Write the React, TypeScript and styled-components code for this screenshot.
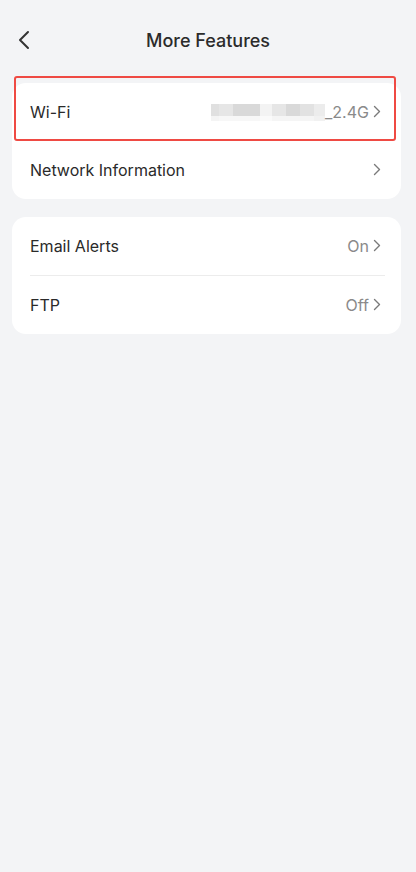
import { createGlobalStyle, styled } from "styled-components";

const GlobalStyle = createGlobalStyle`
    html, body {
        margin: 0;
        padding: 0;
        background: #f3f4f6;
    }
    body {
        font-family: Inter, "Noto Sans", "Liberation Sans", sans-serif;
        -webkit-font-smoothing: antialiased;
    }
`;

const Page = styled.div`
    width: 416px;
    min-height: 872px;
    background: #f3f4f6;
    padding: 0 15px 0 12px;
    box-sizing: border-box;
`;

const Header = styled.div`
    height: 83px;
    display: flex;
    align-items: center;
    position: relative;
    padding-bottom: 3px;
    box-sizing: border-box;
    .back {
        position: absolute;
        left: 5px;
        top: 30px;
        display: flex;
    }
    h1 {
        flex: 1;
        margin: 0;
        text-align: center;
        font-size: 18px;
        font-weight: 500;
        color: #2b2b2b;
        padding-left: 3px;
    }
`;

const Card = styled.div`
    background: #fff;
    border-radius: 14px;
    margin-bottom: 18px;
`;

const Row = styled.div<{ $divider?: boolean }>`
    height: 58px;
    display: flex;
    align-items: center;
    padding: 0 20px 1px 18px;
    position: relative;
    box-sizing: border-box;
    ${(p) => (p.$divider ? "border-bottom: 1px solid #ececec; margin: 0 16px 0 18px; padding: 0 4px 1px 0; height: 59px;" : "")}
    .label {
        flex: 1;
        font-size: 16px;
        color: #2a2a2a;
    }
    .value {
        font-size: 16px;
        color: #8a8a8a;
        margin-right: 4px;
        display: flex;
        align-items: center;
    }
`;

const Highlight = styled.div`
    position: absolute;
    left: 2px;
    right: 5px;
    top: -7px;
    bottom: 0;
    border: 2.5px solid #ef4a43;
    border-radius: 3px;
    pointer-events: none;
`;

const Blur = styled.span`
    display: inline-flex;
    flex-direction: column;
    margin-top: 2px;
    div {
        display: flex;
    }
    span {
        display: block;
    }
`;

const blocks = [
    ["#e0e0e0", 8],
    ["#e6e6e6", 14],
    ["#d9d9d9", 27],
    ["#f3f3f3", 12],
    ["#e6e6e6", 14],
    ["#d9d9d9", 14],
    ["#e2e2e2", 14],
    ["#ececec", 11],
] as const;

const bottoms = [
    ["#f4f4f4", 8],
    ["#f7f7f7", 41],
    ["#fafafa", 12],
    ["#f5f5f5", 42],
    ["#f1f1f1", 11],
] as const;

const Chevron = () => (
    <svg width="8" height="13" viewBox="0 0 8 13">
        <path d="M1.5 1.5 L6.5 6.5 L1.5 11.5" fill="none" stroke="#7a7a7a" strokeWidth="1.4" strokeLinecap="round" strokeLinejoin="round" />
    </svg>
);

const App = () => {
    return (
        <>
            <GlobalStyle />
            <Page>
                <Header>
                    <span className="back">
                        <svg width="14" height="20" viewBox="0 0 14 20">
                            <path d="M11 2 L3 10 L11 18" fill="none" stroke="#333" strokeWidth="2" strokeLinecap="round" strokeLinejoin="round" />
                        </svg>
                    </span>
                    <h1>More Features</h1>
                </Header>
                <Card>
                    <Row>
                        <Highlight />
                        <span className="label">Wi-Fi</span>
                        <span className="value">
                            <Blur>
                                <div>
                                    {blocks.map(([c, w], i) => (
                                        <span key={i} style={{ background: c, width: w, height: 12 }} />
                                    ))}
                                </div>
                                <div>
                                    {bottoms.map(([c, w], i) => (
                                        <span key={i} style={{ background: c, width: w, height: 5 }} />
                                    ))}
                                </div>
                            </Blur>
                            _2.4G
                        </span>
                        <Chevron />
                    </Row>
                    <Row>
                        <span className="label">Network Information</span>
                        <Chevron />
                    </Row>
                </Card>
                <Card>
                    <Row $divider>
                        <span className="label">Email Alerts</span>
                        <span className="value">On</span>
                        <Chevron />
                    </Row>
                    <Row>
                        <span className="label">FTP</span>
                        <span className="value">Off</span>
                        <Chevron />
                    </Row>
                </Card>
            </Page>
        </>
    );
};

export default App;
